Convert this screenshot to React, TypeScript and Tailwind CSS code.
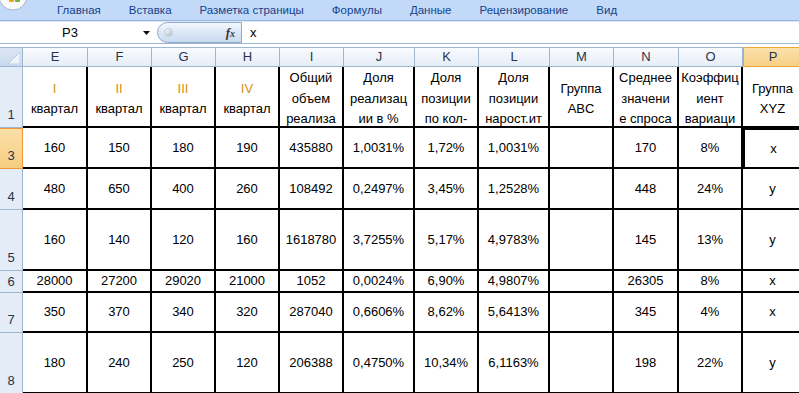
import React from 'react';

const cols = ['E', 'F', 'G', 'H', 'I', 'J', 'K', 'L', 'M', 'N', 'O', 'P', ''];

const tabs = ['Главная', 'Вставка', 'Разметка страницы', 'Формулы', 'Данные', 'Рецензирование', 'Вид'];

// header cells of row 1, already wrapped the way Excel shows them
const headerLines: string[][] = [
  ['I', 'квартал'],
  ['II', 'квартал'],
  ['III', 'квартал'],
  ['IV', 'квартал'],
  ['Общий', 'объем', 'реализа'],
  ['Доля', 'реализац', 'ии в %'],
  ['Доля', 'позиции', 'по кол-'],
  ['Доля', 'позиции', 'нарост.ит'],
  ['Группа', 'ABC'],
  ['Среднее', 'значени', 'е спроса'],
  ['Коэффиц', 'иент', 'вариаци'],
  ['Группа', 'XYZ'],
  [],
];

const rows = [
  { n: '3', cells: ['160', '150', '180', '190', '435880', '1,0031%', '1,72%', '1,0031%', '', '170', '8%', 'x', ''] },
  { n: '4', cells: ['480', '650', '400', '260', '108492', '0,2497%', '3,45%', '1,2528%', '', '448', '24%', 'y', ''] },
  { n: '5', cells: ['160', '140', '120', '160', '1618780', '3,7255%', '5,17%', '4,9783%', '', '145', '13%', 'y', ''] },
  { n: '6', cells: ['28000', '27200', '29020', '21000', '1052', '0,0024%', '6,90%', '4,9807%', '', '26305', '8%', 'x', ''] },
  { n: '7', cells: ['350', '370', '340', '320', '287040', '0,6606%', '8,62%', '5,6413%', '', '345', '4%', 'x', ''] },
  { n: '8', cells: ['180', '240', '250', '120', '206388', '0,4750%', '10,34%', '6,1163%', '', '198', '22%', 'y', ''] },
];

const roman = ['I', 'II', 'III', 'IV'];

function cellBorder(ci: number) {
  if (ci <= 10) return 'border-r-2 border-b-2 border-black';
  if (ci === 11) return 'border-r border-r-[#d0d7e5] border-b-2 border-b-black';
  return 'border-r border-b border-[#d0d7e5]';
}

function OfficeButton() {
  return (
    <svg width="30" height="20" viewBox="0 0 30 20" className="shrink-0">
      <defs>
        <linearGradient id="ob" x1="0" y1="0" x2="0" y2="1">
          <stop offset="0" stopColor="#e8edf4" />
          <stop offset="1" stopColor="#ffffff" />
        </linearGradient>
      </defs>
      <circle cx="13" cy="-4" r="14" fill="url(#ob)" stroke="#a9b6c7" strokeWidth="1" />
      <rect x="9" y="-2" width="5" height="4" rx="1" fill="#f0a21c" />
      <rect x="15" y="-2" width="5" height="4" rx="1" fill="#6cb33f" />
    </svg>
  );
}

export default function App() {
  return (
    <div
      className="w-[799px] h-[393px] overflow-hidden bg-white text-[13px] text-black"
      style={{ fontFamily: '"Liberation Sans", Arial, sans-serif' }}
    >
      {/* Ribbon tabs */}
      <div className="h-[21px] flex items-center bg-[#c2daf8] border-b border-[#93b5e0]">
        <OfficeButton />
        <div className="flex gap-[28px] ml-[27px] text-[11.5px] text-[#15428b] leading-none pt-[2px]">
          {tabs.map((t) => (
            <span key={t}>{t}</span>
          ))}
        </div>
      </div>

      {/* Formula bar */}
      <div className="h-[23px] flex items-stretch border-t border-[#dbe7f7] border-b border-b-[#9fb6d4] bg-white">
        <div className="w-[157px] flex items-center">
          <span className="pl-[62px]">P3</span>
          <svg width="7" height="4" viewBox="0 0 7 4" className="ml-auto mr-[7px]">
            <polygon points="0,0 7,0 3.5,4" fill="#111" />
          </svg>
        </div>
        <div className="w-[85px] flex items-center rounded-l-[11px] border border-[#8ea9cb] bg-gradient-to-b from-[#f3f7fc] via-[#dce8f6] to-[#c9daef]">
          <div className="ml-[6px] w-[9px] h-[9px] rounded-full bg-gradient-to-br from-[#ffffff] to-[#aeb8c4] border border-[#c3ccd8]" />
          <span
            className="ml-auto mr-[6px] italic font-bold text-[13px] text-[#3a3a3a]"
            style={{ fontFamily: '"Liberation Serif", serif' }}
          >
            f<span className="text-[10px]">x</span>
          </span>
        </div>
        <div className="flex items-center pl-[8px]">x</div>
      </div>

      <div className="h-[3px] bg-white" />

      {/* Sheet grid */}
      <div className="grid w-max grid-cols-[23px_65px_64px_64px_64px_64px_71px_64px_71px_64px_65px_64px_60px_64px] grid-rows-[20px_61px_41px_41px_61px_22px_40px_61px]">
        {/* corner */}
        <div className="flex items-end justify-end border-t border-r border-b border-[#9eb6ce] bg-gradient-to-b from-[#dbe6f4] to-[#c9d9ee] pr-[2px] pb-[2px]">
          <svg width="12" height="12" viewBox="0 0 12 12">
            <polygon points="12,0 12,12 0,12" fill="#eef3fa" stroke="#b3c6dd" strokeWidth="0.8" />
          </svg>
        </div>
        {cols.map((c, i) => (
          <div
            key={i}
            className={
              c === 'P'
                ? 'flex items-center justify-center border-t border-[#f0a53c] border-r border-b border-l bg-gradient-to-b from-[#fbe1ad] to-[#f7cf85] text-[#27354a]'
                : 'flex items-center justify-center border-t border-r border-b border-[#9eb6ce] bg-gradient-to-b from-[#f9fbfe] to-[#e6edf7] text-[#27354a]'
            }
          >
            {c}
          </div>
        ))}

        {/* row 1 */}
        <div className="flex items-end justify-center pb-[3px] border-r border-b border-[#9eb6ce] bg-[#e4ecf7] text-[#27354a]">
          1
        </div>
        {headerLines.map((lines, ci) => (
          <div
            key={ci}
            className={`flex flex-col items-center justify-center overflow-hidden pt-[5px] leading-[20.5px] ${cellBorder(ci)}`}
          >
            {lines.map((l, li) => (
              <span key={li} className={`whitespace-nowrap ${li === 0 && roman.includes(l) ? 'text-[#d4900c]' : ''}`}>
                {l}
              </span>
            ))}
          </div>
        ))}

        {/* data rows */}
        {rows.map((r) => (
          <React.Fragment key={r.n}>
            <div
              className={
                r.n === '3'
                  ? 'flex items-end justify-center pb-[3px] border-r border-b border-t border-[#f29536] bg-gradient-to-b from-[#fbe0a9] to-[#f7cd80] text-[#27354a]'
                  : r.n === '6'
                    ? 'flex items-center justify-center border-r border-b border-[#9eb6ce] bg-[#e4ecf7] text-[#27354a]'
                    : 'flex items-end justify-center pb-[3px] border-r border-b border-[#9eb6ce] bg-[#e4ecf7] text-[#27354a]'
              }
            >
              {r.n}
            </div>
            {r.cells.map((v, ci) => (
              <div
                key={ci}
                className={`flex items-center justify-center overflow-hidden whitespace-nowrap ${cellBorder(ci)} ${
                  r.n === '3' && ci === 11 ? 'border-l-2 border-l-black border-t-2 border-t-black' : ''
                }`}
              >
                {v}
              </div>
            ))}
          </React.Fragment>
        ))}
      </div>
    </div>
  );
}
